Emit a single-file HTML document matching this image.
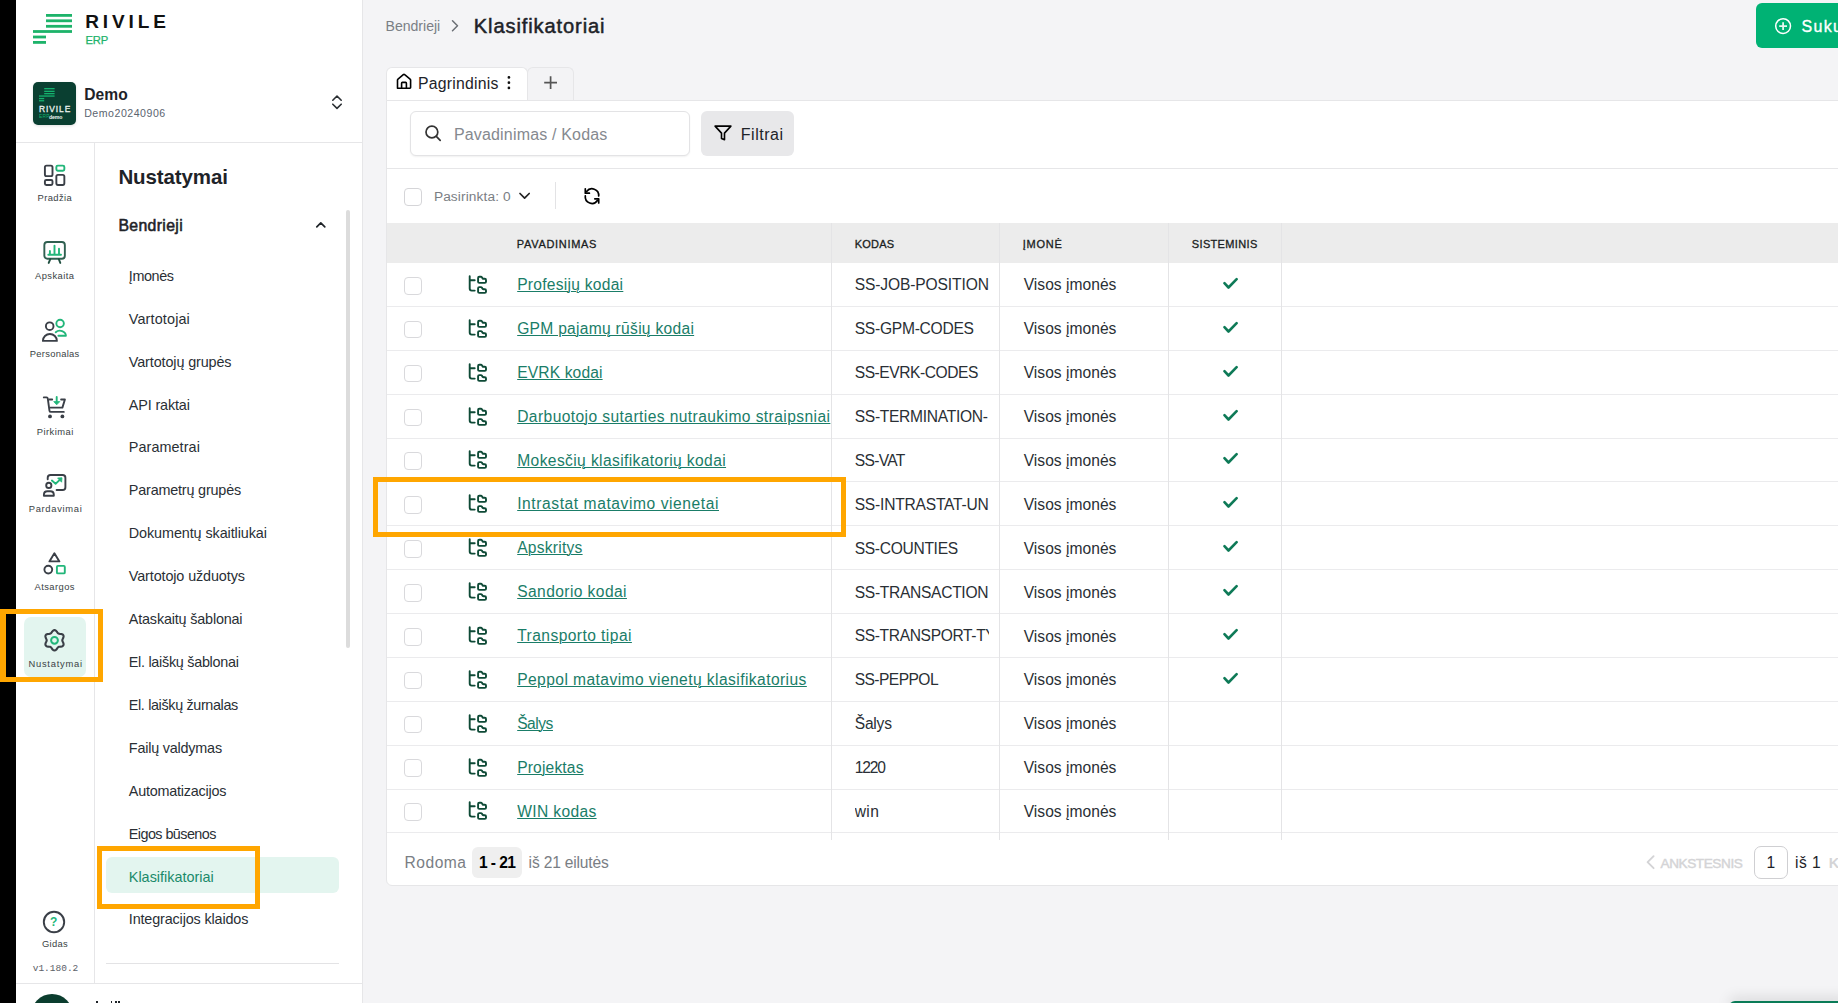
<!DOCTYPE html><html><head><meta charset="utf-8"><style>
*{margin:0;padding:0;box-sizing:border-box}
html,body{width:1838px;height:1003px;overflow:hidden;background:#f4f4f6;font-family:"Liberation Sans", sans-serif;}
.t{position:absolute;line-height:1;white-space:nowrap}
.a{position:absolute}
svg{position:absolute;overflow:visible}
</style></head><body>
<div class="a" style="left:0;top:0;width:16px;height:1003px;background:#000"></div>
<div class="a" style="left:16px;top:0;width:347px;height:1003px;background:#fff;border-right:1px solid #e6e6e8"></div>
<svg style="left:0;top:0" width="200" height="60"><rect x="46" y="14" width="26" height="2.8" fill="#1db36a"/><rect x="46" y="19.4" width="26" height="2.8" fill="#1db36a"/><rect x="46" y="24.9" width="26" height="2.8" fill="#1db36a"/><rect x="33" y="30.1" width="39" height="2.8" fill="#1db36a"/><rect x="33" y="35.6" width="13" height="2.8" fill="#1db36a"/><rect x="33" y="41" width="13" height="2.8" fill="#1db36a"/></svg>
<div class="t" style="left:85.2px;top:11.62px;font-size:19px;color:#111;font-weight:700;letter-spacing:3.900px;">RIVILE</div>
<div class="t" style="left:85.4px;top:34.52px;font-size:11.2px;color:#1db36a;font-weight:400;letter-spacing:-0.050px;-webkit-text-stroke:0.25px #1db36a">ERP</div>
<div class="a" style="left:33px;top:82px;width:43px;height:43px;background:#0a3f31;border-radius:5px;box-shadow:0 1px 3px rgba(0,0,0,.12)"></div>
<svg style="left:0;top:0" width="80" height="130"><rect x="44.2" y="88" width="10.4" height="1.3" fill="#14b26e"/><rect x="44.2" y="90.7" width="10.4" height="1.3" fill="#14b26e"/><rect x="44.2" y="93" width="10.4" height="1.3" fill="#14b26e"/><rect x="39" y="95.4" width="15.6" height="1.3" fill="#14b26e"/><rect x="39" y="97.9" width="5.2" height="1.3" fill="#14b26e"/><rect x="39" y="100.1" width="5.2" height="1.3" fill="#14b26e"/></svg>
<div class="t" style="left:38.9px;top:104.69px;font-size:8.4px;color:#eef2f0;font-weight:400;letter-spacing:0.960px;-webkit-text-stroke:0.3px #eef2f0">RIVILE</div>
<div class="t" style="left:38.9px;top:115.14px;font-size:4.8px;color:#14b26e;font-weight:400;letter-spacing:0.300px;">ERP</div>
<div class="t" style="left:49.0px;top:114.80px;font-size:5.2px;color:#eef2f0;font-weight:700;letter-spacing:-0.100px;">demo</div>
<div class="t" style="left:84.2px;top:86.69px;font-size:15.6px;color:#1e2328;font-weight:700;letter-spacing:0.065px;">Demo</div>
<div class="t" style="left:84.2px;top:107.73px;font-size:10.6px;color:#5b6470;font-weight:400;letter-spacing:0.508px;">Demo20240906</div>
<svg style="left:320px;top:60px" width="40" height="60" viewBox="0 0 40 60"><path d="M12.8 40.2 L17 36 L21.2 40.2 M12.8 44.2 L17 48.4 L21.2 44.2" fill="none" stroke="#2b2f33" stroke-width="1.6" stroke-linecap="round" stroke-linejoin="round"/></svg>
<div class="a" style="left:16px;top:142px;width:346px;height:1px;background:#e6e6e8"></div>
<div class="a" style="left:94px;top:143px;width:1px;height:840px;background:#e6e6e8"></div>
<div class="a" style="left:16px;top:983px;width:346px;height:1px;background:#e6e6e8"></div>
<svg style="left:40px;top:157px" width="30" height="36" viewBox="0 0 30 36"><rect x="4.9" y="8.65" width="7.6" height="10.5" rx="1.6" fill="none" stroke="#3a3f47" stroke-width="1.9" stroke-linecap="round" stroke-linejoin="round"/><rect x="16.35" y="8.65" width="8" height="5.1" rx="1.4" fill="none" stroke="#22b67a" stroke-width="1.9" stroke-linecap="round" stroke-linejoin="round"/><rect x="4.9" y="22.95" width="7.6" height="5" rx="1.4" fill="none" stroke="#3a3f47" stroke-width="1.9" stroke-linecap="round" stroke-linejoin="round"/><rect x="16.35" y="17.85" width="8" height="10.1" rx="1.6" fill="none" stroke="#3a3f47" stroke-width="1.9" stroke-linecap="round" stroke-linejoin="round"/></svg>
<svg style="left:40px;top:234px" width="30" height="36" viewBox="0 0 30 36"><rect x="4.35" y="7.95" width="20.5" height="16.8" rx="3" fill="none" stroke="#2f5f50" stroke-width="1.9" stroke-linecap="round" stroke-linejoin="round"/><path d="M10.3 25.2 L8.7 28.9 M18.8 25.2 L20.3 28.9" fill="none" stroke="#1f4f40" stroke-width="1.9" stroke-linecap="round" stroke-linejoin="round"/><path d="M8.3 20.8 L21 20.8 M9.9 20.8 L9.9 17 M14.5 20.8 L14.5 11.6 M19 20.8 L19 14.8" fill="none" stroke="#22b67a" stroke-width="1.9" stroke-linecap="round" stroke-linejoin="round"/></svg>
<svg style="left:40px;top:312px" width="30" height="36" viewBox="0 0 30 36"><circle cx="9.7" cy="14.2" r="3.8" fill="none" stroke="#3a3f47" stroke-width="1.9" stroke-linecap="round" stroke-linejoin="round"/><path d="M2.9 28.9 A7 6.9 0 0 1 16.9 28.9 Z" fill="none" stroke="#3a3f47" stroke-width="1.9" stroke-linecap="round" stroke-linejoin="round"/><circle cx="20.1" cy="11.5" r="3.75" fill="none" stroke="#22b67a" stroke-width="1.9" stroke-linecap="round" stroke-linejoin="round"/><path d="M15.7 20.2 A6 5.2 0 0 1 25.9 23.8 L18.4 23.8" fill="none" stroke="#22b67a" stroke-width="1.9" stroke-linecap="round" stroke-linejoin="round"/></svg>
<svg style="left:40px;top:390px" width="30" height="36" viewBox="0 0 30 36"><path d="M3.8 7.4 L6.6 7.4 Q7.6 7.4 7.8 8.6 L9.5 20.8 Q9.7 21.9 10.8 21.9 L23.8 21.9" fill="none" stroke="#3a3f47" stroke-width="1.9" stroke-linecap="round" stroke-linejoin="round"/><path d="M9.3 9.5 L12.2 9.5 M21.1 9.5 L24.9 9.5 L22.4 17.6 L10.4 17.6" fill="none" stroke="#3a3f47" stroke-width="1.9" stroke-linecap="round" stroke-linejoin="round"/><circle cx="10" cy="26.4" r="1.9" fill="#3a3f47"/><circle cx="22.4" cy="26.4" r="1.9" fill="#3a3f47"/><path d="M16.7 6.9 L16.7 11.5" fill="none" stroke="#22b67a" stroke-width="1.9" stroke-linecap="round" stroke-linejoin="round"/><path d="M13.7 11.6 L19.8 11.6 L16.7 14.8 Z" fill="#22b67a" stroke="#22b67a" stroke-width="0.8" stroke-linejoin="round"/></svg>
<svg style="left:40px;top:468px" width="30" height="36" viewBox="0 0 30 36"><path d="M7.7 11.3 L7.7 9.8 Q7.7 7 10.5 7 L22.6 7 Q25.4 7 25.4 9.8 L25.4 19.2 Q25.4 22 22.6 22 L16.6 22" fill="none" stroke="#3a3f47" stroke-width="1.9" stroke-linecap="round" stroke-linejoin="round"/><circle cx="8.8" cy="17.4" r="2.6" fill="none" stroke="#3a3f47" stroke-width="1.9" stroke-linecap="round" stroke-linejoin="round"/><path d="M3.9 27.8 L3.9 26.8 Q3.9 23.3 7.4 23.3 L10.3 23.3 Q13.8 23.3 13.8 26.8 L13.8 27.8 Z" fill="none" stroke="#3a3f47" stroke-width="1.9" stroke-linecap="round" stroke-linejoin="round"/><path d="M11.9 12.6 L15.6 15.7 L20.3 11.4" fill="none" stroke="#22b67a" stroke-width="1.9" stroke-linecap="round" stroke-linejoin="round"/><path d="M17.6 10 L22 9.8 L21.6 14.2 Z" fill="#22b67a" stroke="#22b67a" stroke-width="0.8" stroke-linejoin="round"/></svg>
<svg style="left:40px;top:546px" width="30" height="36" viewBox="0 0 30 36"><path d="M14.4 7.2 L19.4 15.4 L9.4 15.4 Z" fill="none" stroke="#3a3f47" stroke-width="1.9" stroke-linecap="round" stroke-linejoin="round"/><circle cx="8.3" cy="23.6" r="3.9" fill="none" stroke="#3a3f47" stroke-width="1.9" stroke-linecap="round" stroke-linejoin="round"/><rect x="16.9" y="19.9" width="7.9" height="7.5" rx="1" fill="none" stroke="#22b67a" stroke-width="1.9" stroke-linecap="round" stroke-linejoin="round"/></svg>
<div class="a" style="left:24px;top:617px;width:62px;height:60px;background:#e3f5ef;border-radius:7px"></div>
<svg style="left:40px;top:622px" width="30" height="36" viewBox="0 0 30 36"><path d="M14.50 8.10 L15.37 8.30 L16.17 8.85 L16.83 9.61 L17.37 10.41 L17.86 11.09 L18.40 11.55 L19.07 11.78 L19.90 11.87 L20.86 11.94 L21.85 12.13 L22.72 12.54 L23.33 13.20 L23.60 14.06 L23.52 15.02 L23.19 15.97 L22.77 16.84 L22.43 17.61 L22.30 18.30 L22.43 18.99 L22.77 19.76 L23.19 20.63 L23.52 21.58 L23.60 22.54 L23.33 23.40 L22.72 24.06 L21.85 24.47 L20.86 24.66 L19.90 24.73 L19.07 24.82 L18.40 25.05 L17.86 25.51 L17.37 26.19 L16.83 26.99 L16.17 27.75 L15.37 28.30 L14.50 28.50 L13.63 28.30 L12.83 27.75 L12.17 26.99 L11.63 26.19 L11.14 25.51 L10.60 25.05 L9.93 24.82 L9.10 24.73 L8.14 24.66 L7.15 24.47 L6.28 24.06 L5.67 23.40 L5.40 22.54 L5.48 21.58 L5.81 20.63 L6.23 19.76 L6.57 18.99 L6.70 18.30 L6.57 17.61 L6.23 16.84 L5.81 15.97 L5.48 15.02 L5.40 14.06 L5.67 13.20 L6.28 12.54 L7.15 12.13 L8.14 11.94 L9.10 11.87 L9.93 11.78 L10.60 11.55 L11.14 11.09 L11.63 10.41 L12.17 9.61 L12.83 8.85 L13.63 8.30 L14.50 8.10Z" fill="none" stroke="#3a3f47" stroke-width="2.1" stroke-linecap="round" stroke-linejoin="round"/><circle cx="14.5" cy="18.3" r="3.4" fill="none" stroke="#22b67a" stroke-width="2.0" stroke-linecap="round" stroke-linejoin="round"/></svg>
<svg style="left:43.4px;top:910.6px" width="22" height="22" viewBox="0 0 22 22"><circle cx="11" cy="11" r="10.2" fill="none" stroke="#3a3f47" stroke-width="1.9" stroke-linecap="round" stroke-linejoin="round"/></svg>
<div class="t" style="left:49.9px;top:915.84px;font-size:12px;color:#22b67a;font-weight:700;letter-spacing:0.000px;">?</div>
<div class="t" style="left:37.5px;top:193.04px;font-size:9.4px;color:#3a3f45;font-weight:400;letter-spacing:0.417px;">Pradžia</div>
<div class="t" style="left:35.0px;top:271.24px;font-size:9.4px;color:#3a3f45;font-weight:400;letter-spacing:0.445px;">Apskaita</div>
<div class="t" style="left:29.8px;top:349.04px;font-size:9.4px;color:#3a3f45;font-weight:400;letter-spacing:0.278px;">Personalas</div>
<div class="t" style="left:36.7px;top:426.54px;font-size:9.4px;color:#3a3f45;font-weight:400;letter-spacing:0.456px;">Pirkimai</div>
<div class="t" style="left:28.7px;top:504.34px;font-size:9.4px;color:#3a3f45;font-weight:400;letter-spacing:0.692px;">Pardavimai</div>
<div class="t" style="left:34.5px;top:582.34px;font-size:9.4px;color:#3a3f45;font-weight:400;letter-spacing:0.429px;">Atsargos</div>
<div class="t" style="left:28.5px;top:658.84px;font-size:9.4px;color:#3a3f45;font-weight:400;letter-spacing:0.732px;">Nustatymai</div>
<div class="t" style="left:41.9px;top:939.04px;font-size:9.4px;color:#3a3f45;font-weight:400;letter-spacing:0.325px;">Gidas</div>
<div class="t" style="left:32.7px;top:964.0px;font-size:9.5px;font-family:'Liberation Mono',monospace;color:#5c6168">v1.180.2</div>
<div class="a" style="left:31.3px;top:993.7px;width:42.2px;height:42.2px;border-radius:50%;background:#0b3d2e"></div>
<div class="a" style="left:95.9px;top:1001.2px;width:1.7px;height:2px;background:#1e2328"></div>
<div class="a" style="left:110.6px;top:1001.2px;width:1.7px;height:2px;background:#1e2328"></div>
<div class="a" style="left:114.9px;top:1001.2px;width:1.7px;height:2px;background:#1e2328"></div>
<div class="a" style="left:118.4px;top:1001.2px;width:1.7px;height:2px;background:#1e2328"></div>
<div class="t" style="left:118.4px;top:167.15px;font-size:20.5px;color:#1e2328;font-weight:700;letter-spacing:-0.108px;">Nustatymai</div>
<div class="t" style="left:118.4px;top:218.23px;font-size:15.8px;color:#1e2328;font-weight:400;letter-spacing:0.350px;-webkit-text-stroke:0.55px #1e2328">Bendrieji</div>
<svg style="left:310px;top:215px" width="20" height="20" viewBox="0 0 20 20"><path d="M6.8 11.8 L10.8 7.8 L14.8 11.8" fill="none" stroke="#1e2328" stroke-width="1.7" stroke-linecap="round" stroke-linejoin="round"/></svg>
<div class="a" style="left:346px;top:210px;width:4px;height:438px;background:#dcdcdc;border-radius:2px"></div>
<div class="a" style="left:106px;top:857px;width:233px;height:36px;background:#e3f5ef;border-radius:6px"></div>
<div class="t" style="left:128.8px;top:268.81px;font-size:14.4px;color:#2a2f35;font-weight:400;letter-spacing:-0.410px;">Įmonės</div>
<div class="t" style="left:128.8px;top:311.72px;font-size:14.4px;color:#2a2f35;font-weight:400;letter-spacing:0.143px;">Vartotojai</div>
<div class="t" style="left:128.8px;top:354.63px;font-size:14.4px;color:#2a2f35;font-weight:400;letter-spacing:-0.117px;">Vartotojų grupės</div>
<div class="t" style="left:128.8px;top:397.54px;font-size:14.4px;color:#2a2f35;font-weight:400;letter-spacing:-0.150px;">API raktai</div>
<div class="t" style="left:128.8px;top:440.45px;font-size:14.4px;color:#2a2f35;font-weight:400;letter-spacing:0.072px;">Parametrai</div>
<div class="t" style="left:128.8px;top:483.36px;font-size:14.4px;color:#2a2f35;font-weight:400;letter-spacing:-0.188px;">Parametrų grupės</div>
<div class="t" style="left:128.8px;top:526.27px;font-size:14.4px;color:#2a2f35;font-weight:400;letter-spacing:-0.095px;">Dokumentų skaitliukai</div>
<div class="t" style="left:128.8px;top:569.18px;font-size:14.4px;color:#2a2f35;font-weight:400;letter-spacing:-0.119px;">Vartotojo užduotys</div>
<div class="t" style="left:128.8px;top:612.09px;font-size:14.4px;color:#2a2f35;font-weight:400;letter-spacing:-0.178px;">Ataskaitų šablonai</div>
<div class="t" style="left:128.8px;top:655.00px;font-size:14.4px;color:#2a2f35;font-weight:400;letter-spacing:-0.283px;">El. laiškų šablonai</div>
<div class="t" style="left:128.8px;top:697.91px;font-size:14.4px;color:#2a2f35;font-weight:400;letter-spacing:-0.361px;">El. laiškų žurnalas</div>
<div class="t" style="left:128.8px;top:740.82px;font-size:14.4px;color:#2a2f35;font-weight:400;letter-spacing:-0.205px;">Failų valdymas</div>
<div class="t" style="left:128.8px;top:783.73px;font-size:14.4px;color:#2a2f35;font-weight:400;letter-spacing:-0.221px;">Automatizacijos</div>
<div class="t" style="left:128.8px;top:826.64px;font-size:14.4px;color:#2a2f35;font-weight:400;letter-spacing:-0.567px;">Eigos būsenos</div>
<div class="t" style="left:128.8px;top:869.55px;font-size:14.4px;color:#1a8a6a;font-weight:400;letter-spacing:0.011px;">Klasifikatoriai</div>
<div class="t" style="left:128.8px;top:912.46px;font-size:14.4px;color:#2a2f35;font-weight:400;letter-spacing:-0.150px;">Integracijos klaidos</div>
<div class="a" style="left:106px;top:963px;width:233px;height:1px;background:#e3e3e5"></div>
<div class="t" style="left:385.5px;top:18.96px;font-size:14.1px;color:#7b7f85;font-weight:400;letter-spacing:-0.018px;">Bendrieji</div>
<svg style="left:448px;top:16px" width="16" height="20" viewBox="0 0 16 20"><path d="M4.5 4.8 L9.5 9.8 L4.5 14.8" fill="none" stroke="#6b6f75" stroke-width="1.5" stroke-linecap="round" stroke-linejoin="round"/></svg>
<div class="t" style="left:473.8px;top:15.79px;font-size:20.1px;color:#1e2328;font-weight:400;letter-spacing:0.886px;-webkit-text-stroke:0.5px #1e2328">Klasifikatoriai</div>
<div class="a" style="left:1756px;top:3px;width:120px;height:45px;background:#00b274;border-radius:6px"></div>
<svg style="left:1765px;top:8px" width="36" height="36" viewBox="0 0 36 36"><circle cx="18.1" cy="18.1" r="7.4" fill="none" stroke="#fff" stroke-width="1.5"/><path d="M14.2 18.1 L22 18.1 M18.1 14.2 L18.1 22" stroke="#e8f7f0" stroke-width="1.8"/></svg>
<div class="t" style="left:1801.5px;top:18.86px;font-size:16px;color:#fff;font-weight:400;letter-spacing:1.300px;-webkit-text-stroke:0.35px #fff">Sukurti</div>
<div class="a" style="left:386px;top:67px;width:142px;height:34px;background:#fff;border:1px solid #e6e6e8;border-bottom:none;border-radius:6px 6px 0 0"></div>
<div class="a" style="left:527px;top:67px;width:47px;height:34px;background:#f3f3f5;border:1px solid #e6e6e8;border-bottom:none;border-radius:6px 6px 0 0"></div>
<svg style="left:392px;top:70px" width="24" height="24" viewBox="0 0 24 24"><path d="M5.5 18.2 L5.5 10 Q5.5 9.5 6 9.1 L11.3 4.7 Q12 4.1 12.7 4.7 L18.1 9.1 Q18.6 9.5 18.6 10 L18.6 17.6 Q18.6 18.2 18 18.2 Z M9.6 18.2 L9.6 13.2 Q9.6 12.4 10.4 12.4 L13.6 12.4 Q14.4 12.4 14.4 13.2 L14.4 18.2" fill="none" stroke="#000" stroke-width="1.6" stroke-linecap="round" stroke-linejoin="round"/></svg>
<div class="t" style="left:418.0px;top:75.63px;font-size:15.8px;color:#1e2328;font-weight:400;letter-spacing:0.230px;">Pagrindinis</div>
<svg style="left:500px;top:70px" width="16" height="24" viewBox="0 0 16 24"><circle cx="8.9" cy="7.4" r="1.35" fill="#111"/><circle cx="8.9" cy="12.7" r="1.35" fill="#111"/><circle cx="8.9" cy="17.9" r="1.35" fill="#111"/></svg>
<svg style="left:536px;top:70px" width="30" height="24" viewBox="0 0 30 24"><path d="M8.2 12.6 L21 12.6 M14.6 6.2 L14.6 19" stroke="#555" stroke-width="1.7"/></svg>
<div class="a" style="left:386px;top:100px;width:1460px;height:786px;background:#fff;border:1px solid #e6e6e8;border-radius:0 0 0 6px"></div>
<div class="a" style="left:409.5px;top:111px;width:280px;height:45px;background:#fff;border:1px solid #e3e3e5;border-radius:6px;box-shadow:0 1px 2px rgba(0,0,0,.06)"></div>
<svg style="left:420px;top:120px" width="26" height="26" viewBox="0 0 26 26"><circle cx="11.9" cy="12" r="5.9" fill="none" stroke="#333" stroke-width="1.7" stroke-linecap="round" stroke-linejoin="round"/><path d="M16.3 16.4 L20.2 20.3" fill="none" stroke="#333" stroke-width="1.7" stroke-linecap="round" stroke-linejoin="round"/></svg>
<div class="t" style="left:453.9px;top:126.86px;font-size:16px;color:#85898f;font-weight:400;letter-spacing:0.171px;">Pavadinimas / Kodas</div>
<div class="a" style="left:701px;top:111px;width:93px;height:45px;background:#e8e8ea;border-radius:6px"></div>
<svg style="left:710px;top:118px" width="28" height="30" viewBox="0 0 28 30"><path d="M5.1 8.1 L20.9 8.1 L14.5 15.1 L14.5 21.8 L11.5 20.6 L11.5 15.1 Z" fill="none" stroke="#000" stroke-width="1.6" stroke-linecap="round" stroke-linejoin="round"/></svg>
<div class="t" style="left:740.8px;top:126.86px;font-size:16px;color:#1e2328;font-weight:400;letter-spacing:0.515px;">Filtrai</div>
<div class="a" style="left:386px;top:168px;width:1452px;height:1px;background:#e6e6e8"></div>
<div class="a" style="left:404px;top:188px;width:18px;height:18px;border:1px solid #d5d5d8;border-radius:4px;background:#fff"></div>
<div class="t" style="left:433.9px;top:190.30px;font-size:13.7px;color:#7a7e84;font-weight:400;letter-spacing:0.115px;">Pasirinkta: 0</div>
<svg style="left:515px;top:186px" width="20" height="20" viewBox="0 0 20 20"><path d="M5 7.5 L9.6 12.2 L14.2 7.5" fill="none" stroke="#222" stroke-width="1.7" stroke-linecap="round" stroke-linejoin="round"/></svg>
<div class="a" style="left:555px;top:182px;width:1px;height:27px;background:#e3e3e5"></div>
<svg style="left:578px;top:182px" width="28" height="28" viewBox="0 0 28 28"><path d="M20.7 14 A6.7 6.7 0 0 0 8.6 9.6" fill="none" stroke="#000" stroke-width="1.7" stroke-linecap="round" stroke-linejoin="round"/><path d="M7.3 6.8 L7.3 11.2 L11.4 11.2" fill="none" stroke="#000" stroke-width="1.7" stroke-linecap="round" stroke-linejoin="round"/><path d="M7.3 13.9 A6.7 6.7 0 0 0 19.6 18.3" fill="none" stroke="#000" stroke-width="1.7" stroke-linecap="round" stroke-linejoin="round"/><path d="M16.8 16.8 L20.7 16.8 L20.7 20.9" fill="none" stroke="#000" stroke-width="1.7" stroke-linecap="round" stroke-linejoin="round"/></svg>
<div class="a" style="left:387px;top:223px;width:1451px;height:40px;background:#ececec"></div>
<div class="t" style="left:516.8px;top:238.89px;font-size:11px;color:#1a1d21;font-weight:400;letter-spacing:0.680px;-webkit-text-stroke:0.3px #1a1d21">PAVADINIMAS</div>
<div class="t" style="left:854.7px;top:238.89px;font-size:11px;color:#1a1d21;font-weight:400;letter-spacing:0.250px;-webkit-text-stroke:0.3px #1a1d21">KODAS</div>
<div class="t" style="left:1022.8px;top:238.89px;font-size:11px;color:#1a1d21;font-weight:400;letter-spacing:0.725px;-webkit-text-stroke:0.3px #1a1d21">ĮMONĖ</div>
<div class="t" style="left:1191.8px;top:238.89px;font-size:11px;color:#1a1d21;font-weight:400;letter-spacing:0.344px;-webkit-text-stroke:0.3px #1a1d21">SISTEMINIS</div>
<div class="a" style="left:387px;top:305.97px;width:1451px;height:1px;background:#ebebed"></div>
<div class="a" style="left:404.3px;top:276.90px;width:17.5px;height:17.7px;border:1px solid #d9d9dc;border-radius:4px;background:#fff"></div>
<svg style="left:463px;top:270.0px" width="30" height="30" viewBox="0 0 30 30"><path d="M6.7 6.2 L6.7 18.6 Q6.7 20.6 8.7 20.6 L11.7 20.6 M6.7 10.3 L11.7 10.3" fill="none" stroke="#0e4a36" stroke-width="1.9" stroke-linecap="round" stroke-linejoin="round"/><path d="M15.1 12 L15.1 7.9 Q15.1 6.7 16.3 6.7 L17.9 6.7 Q18.6 6.7 19 7.4 L19.5 8.3 Q19.9 8.8 20.6 8.8 L21.8 8.8 Q23 8.8 23 10 L23 11.7 Q23 12.9 21.8 12.9 L16.3 12.9 Q15.1 12.9 15.1 11.7 Z" fill="none" stroke="#0e4a36" stroke-width="1.9" stroke-linecap="round" stroke-linejoin="round"/><path d="M15.1 22 L15.1 18.3 Q15.1 17.1 16.3 17.1 L17.9 17.1 Q18.6 17.1 19 17.8 L19.5 18.7 Q19.9 19.2 20.6 19.2 L21.8 19.2 Q23 19.2 23 20.4 L23 21.7 Q23 22.9 21.8 22.9 L16.3 22.9 Q15.1 22.9 15.1 21.7 Z" fill="none" stroke="#0e4a36" stroke-width="1.9" stroke-linecap="round" stroke-linejoin="round"/></svg>
<div class="t" style="left:517.2px;top:276.79px;font-size:15.6px;color:#1a7d68;font-weight:400;letter-spacing:0.257px;text-decoration:underline;text-underline-offset:0.7px;text-decoration-thickness:1px">Profesijų kodai</div>
<div class="a" style="left:854.7px;top:262.60px;width:134.3px;height:43.87px;overflow:hidden"><div class="t" style="left:0.0px;top:14.39px;font-size:15.6px;color:#2a2f35;font-weight:400;letter-spacing:-0.130px;">SS-JOB-POSITION</div>
</div>
<div class="t" style="left:1023.7px;top:276.99px;font-size:15.6px;color:#2a2f35;font-weight:400;letter-spacing:0.022px;">Visos įmonės</div>
<svg style="left:1215px;top:272.0px" width="30" height="24" viewBox="0 0 30 24"><path d="M9.45 11.2 L13.5 15.5 L21.65 7.2" fill="none" stroke="#0e7a57" stroke-width="2.6" stroke-linecap="round" stroke-linejoin="round"/></svg>
<div class="a" style="left:387px;top:349.84px;width:1451px;height:1px;background:#ebebed"></div>
<div class="a" style="left:404.3px;top:320.77px;width:17.5px;height:17.7px;border:1px solid #d9d9dc;border-radius:4px;background:#fff"></div>
<svg style="left:463px;top:313.87px" width="30" height="30" viewBox="0 0 30 30"><path d="M6.7 6.2 L6.7 18.6 Q6.7 20.6 8.7 20.6 L11.7 20.6 M6.7 10.3 L11.7 10.3" fill="none" stroke="#0e4a36" stroke-width="1.9" stroke-linecap="round" stroke-linejoin="round"/><path d="M15.1 12 L15.1 7.9 Q15.1 6.7 16.3 6.7 L17.9 6.7 Q18.6 6.7 19 7.4 L19.5 8.3 Q19.9 8.8 20.6 8.8 L21.8 8.8 Q23 8.8 23 10 L23 11.7 Q23 12.9 21.8 12.9 L16.3 12.9 Q15.1 12.9 15.1 11.7 Z" fill="none" stroke="#0e4a36" stroke-width="1.9" stroke-linecap="round" stroke-linejoin="round"/><path d="M15.1 22 L15.1 18.3 Q15.1 17.1 16.3 17.1 L17.9 17.1 Q18.6 17.1 19 17.8 L19.5 18.7 Q19.9 19.2 20.6 19.2 L21.8 19.2 Q23 19.2 23 20.4 L23 21.7 Q23 22.9 21.8 22.9 L16.3 22.9 Q15.1 22.9 15.1 21.7 Z" fill="none" stroke="#0e4a36" stroke-width="1.9" stroke-linecap="round" stroke-linejoin="round"/></svg>
<div class="t" style="left:517.2px;top:320.73px;font-size:15.6px;color:#1a7d68;font-weight:400;letter-spacing:0.282px;text-decoration:underline;text-underline-offset:0.7px;text-decoration-thickness:1px">GPM pajamų rūšių kodai</div>
<div class="a" style="left:854.7px;top:306.47px;width:134.3px;height:43.87px;overflow:hidden"><div class="t" style="left:0.0px;top:14.46px;font-size:15.6px;color:#2a2f35;font-weight:400;letter-spacing:-0.259px;">SS-GPM-CODES</div>
</div>
<div class="t" style="left:1023.7px;top:320.93px;font-size:15.6px;color:#2a2f35;font-weight:400;letter-spacing:0.022px;">Visos įmonės</div>
<svg style="left:1215px;top:315.87px" width="30" height="24" viewBox="0 0 30 24"><path d="M9.45 11.2 L13.5 15.5 L21.65 7.2" fill="none" stroke="#0e7a57" stroke-width="2.6" stroke-linecap="round" stroke-linejoin="round"/></svg>
<div class="a" style="left:387px;top:393.71px;width:1451px;height:1px;background:#ebebed"></div>
<div class="a" style="left:404.3px;top:364.64px;width:17.5px;height:17.7px;border:1px solid #d9d9dc;border-radius:4px;background:#fff"></div>
<svg style="left:463px;top:357.74px" width="30" height="30" viewBox="0 0 30 30"><path d="M6.7 6.2 L6.7 18.6 Q6.7 20.6 8.7 20.6 L11.7 20.6 M6.7 10.3 L11.7 10.3" fill="none" stroke="#0e4a36" stroke-width="1.9" stroke-linecap="round" stroke-linejoin="round"/><path d="M15.1 12 L15.1 7.9 Q15.1 6.7 16.3 6.7 L17.9 6.7 Q18.6 6.7 19 7.4 L19.5 8.3 Q19.9 8.8 20.6 8.8 L21.8 8.8 Q23 8.8 23 10 L23 11.7 Q23 12.9 21.8 12.9 L16.3 12.9 Q15.1 12.9 15.1 11.7 Z" fill="none" stroke="#0e4a36" stroke-width="1.9" stroke-linecap="round" stroke-linejoin="round"/><path d="M15.1 22 L15.1 18.3 Q15.1 17.1 16.3 17.1 L17.9 17.1 Q18.6 17.1 19 17.8 L19.5 18.7 Q19.9 19.2 20.6 19.2 L21.8 19.2 Q23 19.2 23 20.4 L23 21.7 Q23 22.9 21.8 22.9 L16.3 22.9 Q15.1 22.9 15.1 21.7 Z" fill="none" stroke="#0e4a36" stroke-width="1.9" stroke-linecap="round" stroke-linejoin="round"/></svg>
<div class="t" style="left:517.2px;top:364.67px;font-size:15.6px;color:#1a7d68;font-weight:400;letter-spacing:0.133px;text-decoration:underline;text-underline-offset:0.7px;text-decoration-thickness:1px">EVRK kodai</div>
<div class="a" style="left:854.7px;top:350.34px;width:134.3px;height:43.87px;overflow:hidden"><div class="t" style="left:0.0px;top:14.53px;font-size:15.6px;color:#2a2f35;font-weight:400;letter-spacing:-0.445px;">SS-EVRK-CODES</div>
</div>
<div class="t" style="left:1023.7px;top:364.87px;font-size:15.6px;color:#2a2f35;font-weight:400;letter-spacing:0.022px;">Visos įmonės</div>
<svg style="left:1215px;top:359.74px" width="30" height="24" viewBox="0 0 30 24"><path d="M9.45 11.2 L13.5 15.5 L21.65 7.2" fill="none" stroke="#0e7a57" stroke-width="2.6" stroke-linecap="round" stroke-linejoin="round"/></svg>
<div class="a" style="left:387px;top:437.58px;width:1451px;height:1px;background:#ebebed"></div>
<div class="a" style="left:404.3px;top:408.51px;width:17.5px;height:17.7px;border:1px solid #d9d9dc;border-radius:4px;background:#fff"></div>
<svg style="left:463px;top:401.61px" width="30" height="30" viewBox="0 0 30 30"><path d="M6.7 6.2 L6.7 18.6 Q6.7 20.6 8.7 20.6 L11.7 20.6 M6.7 10.3 L11.7 10.3" fill="none" stroke="#0e4a36" stroke-width="1.9" stroke-linecap="round" stroke-linejoin="round"/><path d="M15.1 12 L15.1 7.9 Q15.1 6.7 16.3 6.7 L17.9 6.7 Q18.6 6.7 19 7.4 L19.5 8.3 Q19.9 8.8 20.6 8.8 L21.8 8.8 Q23 8.8 23 10 L23 11.7 Q23 12.9 21.8 12.9 L16.3 12.9 Q15.1 12.9 15.1 11.7 Z" fill="none" stroke="#0e4a36" stroke-width="1.9" stroke-linecap="round" stroke-linejoin="round"/><path d="M15.1 22 L15.1 18.3 Q15.1 17.1 16.3 17.1 L17.9 17.1 Q18.6 17.1 19 17.8 L19.5 18.7 Q19.9 19.2 20.6 19.2 L21.8 19.2 Q23 19.2 23 20.4 L23 21.7 Q23 22.9 21.8 22.9 L16.3 22.9 Q15.1 22.9 15.1 21.7 Z" fill="none" stroke="#0e4a36" stroke-width="1.9" stroke-linecap="round" stroke-linejoin="round"/></svg>
<div class="t" style="left:517.2px;top:408.61px;font-size:15.6px;color:#1a7d68;font-weight:400;letter-spacing:0.410px;text-decoration:underline;text-underline-offset:0.7px;text-decoration-thickness:1px">Darbuotojo sutarties nutraukimo straipsniai</div>
<div class="a" style="left:854.7px;top:394.21px;width:134.3px;height:43.87px;overflow:hidden"><div class="t" style="left:0.0px;top:14.60px;font-size:15.6px;color:#2a2f35;font-weight:400;letter-spacing:-0.303px;">SS-TERMINATION-</div>
</div>
<div class="t" style="left:1023.7px;top:408.81px;font-size:15.6px;color:#2a2f35;font-weight:400;letter-spacing:0.022px;">Visos įmonės</div>
<svg style="left:1215px;top:403.61px" width="30" height="24" viewBox="0 0 30 24"><path d="M9.45 11.2 L13.5 15.5 L21.65 7.2" fill="none" stroke="#0e7a57" stroke-width="2.6" stroke-linecap="round" stroke-linejoin="round"/></svg>
<div class="a" style="left:387px;top:481.45px;width:1451px;height:1px;background:#ebebed"></div>
<div class="a" style="left:404.3px;top:452.38px;width:17.5px;height:17.7px;border:1px solid #d9d9dc;border-radius:4px;background:#fff"></div>
<svg style="left:463px;top:445.48px" width="30" height="30" viewBox="0 0 30 30"><path d="M6.7 6.2 L6.7 18.6 Q6.7 20.6 8.7 20.6 L11.7 20.6 M6.7 10.3 L11.7 10.3" fill="none" stroke="#0e4a36" stroke-width="1.9" stroke-linecap="round" stroke-linejoin="round"/><path d="M15.1 12 L15.1 7.9 Q15.1 6.7 16.3 6.7 L17.9 6.7 Q18.6 6.7 19 7.4 L19.5 8.3 Q19.9 8.8 20.6 8.8 L21.8 8.8 Q23 8.8 23 10 L23 11.7 Q23 12.9 21.8 12.9 L16.3 12.9 Q15.1 12.9 15.1 11.7 Z" fill="none" stroke="#0e4a36" stroke-width="1.9" stroke-linecap="round" stroke-linejoin="round"/><path d="M15.1 22 L15.1 18.3 Q15.1 17.1 16.3 17.1 L17.9 17.1 Q18.6 17.1 19 17.8 L19.5 18.7 Q19.9 19.2 20.6 19.2 L21.8 19.2 Q23 19.2 23 20.4 L23 21.7 Q23 22.9 21.8 22.9 L16.3 22.9 Q15.1 22.9 15.1 21.7 Z" fill="none" stroke="#0e4a36" stroke-width="1.9" stroke-linecap="round" stroke-linejoin="round"/></svg>
<div class="t" style="left:517.2px;top:452.55px;font-size:15.6px;color:#1a7d68;font-weight:400;letter-spacing:0.389px;text-decoration:underline;text-underline-offset:0.7px;text-decoration-thickness:1px">Mokesčių klasifikatorių kodai</div>
<div class="a" style="left:854.7px;top:438.08px;width:134.3px;height:43.87px;overflow:hidden"><div class="t" style="left:0.0px;top:14.67px;font-size:15.6px;color:#2a2f35;font-weight:400;letter-spacing:-0.672px;">SS-VAT</div>
</div>
<div class="t" style="left:1023.7px;top:452.75px;font-size:15.6px;color:#2a2f35;font-weight:400;letter-spacing:0.022px;">Visos įmonės</div>
<svg style="left:1215px;top:447.48px" width="30" height="24" viewBox="0 0 30 24"><path d="M9.45 11.2 L13.5 15.5 L21.65 7.2" fill="none" stroke="#0e7a57" stroke-width="2.6" stroke-linecap="round" stroke-linejoin="round"/></svg>
<div class="a" style="left:387px;top:525.32px;width:1451px;height:1px;background:#ebebed"></div>
<div class="a" style="left:404.3px;top:496.25px;width:17.5px;height:17.7px;border:1px solid #d9d9dc;border-radius:4px;background:#fff"></div>
<svg style="left:463px;top:489.35px" width="30" height="30" viewBox="0 0 30 30"><path d="M6.7 6.2 L6.7 18.6 Q6.7 20.6 8.7 20.6 L11.7 20.6 M6.7 10.3 L11.7 10.3" fill="none" stroke="#0e4a36" stroke-width="1.9" stroke-linecap="round" stroke-linejoin="round"/><path d="M15.1 12 L15.1 7.9 Q15.1 6.7 16.3 6.7 L17.9 6.7 Q18.6 6.7 19 7.4 L19.5 8.3 Q19.9 8.8 20.6 8.8 L21.8 8.8 Q23 8.8 23 10 L23 11.7 Q23 12.9 21.8 12.9 L16.3 12.9 Q15.1 12.9 15.1 11.7 Z" fill="none" stroke="#0e4a36" stroke-width="1.9" stroke-linecap="round" stroke-linejoin="round"/><path d="M15.1 22 L15.1 18.3 Q15.1 17.1 16.3 17.1 L17.9 17.1 Q18.6 17.1 19 17.8 L19.5 18.7 Q19.9 19.2 20.6 19.2 L21.8 19.2 Q23 19.2 23 20.4 L23 21.7 Q23 22.9 21.8 22.9 L16.3 22.9 Q15.1 22.9 15.1 21.7 Z" fill="none" stroke="#0e4a36" stroke-width="1.9" stroke-linecap="round" stroke-linejoin="round"/></svg>
<div class="t" style="left:517.2px;top:496.49px;font-size:15.6px;color:#1a7d68;font-weight:400;letter-spacing:0.573px;text-decoration:underline;text-underline-offset:0.7px;text-decoration-thickness:1px">Intrastat matavimo vienetai</div>
<div class="a" style="left:854.7px;top:481.95px;width:134.3px;height:43.87px;overflow:hidden"><div class="t" style="left:0.0px;top:14.74px;font-size:15.6px;color:#2a2f35;font-weight:400;letter-spacing:-0.217px;">SS-INTRASTAT-UN</div>
</div>
<div class="t" style="left:1023.7px;top:496.69px;font-size:15.6px;color:#2a2f35;font-weight:400;letter-spacing:0.022px;">Visos įmonės</div>
<svg style="left:1215px;top:491.35px" width="30" height="24" viewBox="0 0 30 24"><path d="M9.45 11.2 L13.5 15.5 L21.65 7.2" fill="none" stroke="#0e7a57" stroke-width="2.6" stroke-linecap="round" stroke-linejoin="round"/></svg>
<div class="a" style="left:387px;top:569.19px;width:1451px;height:1px;background:#ebebed"></div>
<div class="a" style="left:404.3px;top:540.12px;width:17.5px;height:17.7px;border:1px solid #d9d9dc;border-radius:4px;background:#fff"></div>
<svg style="left:463px;top:533.22px" width="30" height="30" viewBox="0 0 30 30"><path d="M6.7 6.2 L6.7 18.6 Q6.7 20.6 8.7 20.6 L11.7 20.6 M6.7 10.3 L11.7 10.3" fill="none" stroke="#0e4a36" stroke-width="1.9" stroke-linecap="round" stroke-linejoin="round"/><path d="M15.1 12 L15.1 7.9 Q15.1 6.7 16.3 6.7 L17.9 6.7 Q18.6 6.7 19 7.4 L19.5 8.3 Q19.9 8.8 20.6 8.8 L21.8 8.8 Q23 8.8 23 10 L23 11.7 Q23 12.9 21.8 12.9 L16.3 12.9 Q15.1 12.9 15.1 11.7 Z" fill="none" stroke="#0e4a36" stroke-width="1.9" stroke-linecap="round" stroke-linejoin="round"/><path d="M15.1 22 L15.1 18.3 Q15.1 17.1 16.3 17.1 L17.9 17.1 Q18.6 17.1 19 17.8 L19.5 18.7 Q19.9 19.2 20.6 19.2 L21.8 19.2 Q23 19.2 23 20.4 L23 21.7 Q23 22.9 21.8 22.9 L16.3 22.9 Q15.1 22.9 15.1 21.7 Z" fill="none" stroke="#0e4a36" stroke-width="1.9" stroke-linecap="round" stroke-linejoin="round"/></svg>
<div class="t" style="left:517.2px;top:540.43px;font-size:15.6px;color:#1a7d68;font-weight:400;letter-spacing:0.238px;text-decoration:underline;text-underline-offset:0.7px;text-decoration-thickness:1px">Apskritys</div>
<div class="a" style="left:854.7px;top:525.82px;width:134.3px;height:43.87px;overflow:hidden"><div class="t" style="left:0.0px;top:14.81px;font-size:15.6px;color:#2a2f35;font-weight:400;letter-spacing:-0.312px;">SS-COUNTIES</div>
</div>
<div class="t" style="left:1023.7px;top:540.63px;font-size:15.6px;color:#2a2f35;font-weight:400;letter-spacing:0.022px;">Visos įmonės</div>
<svg style="left:1215px;top:535.22px" width="30" height="24" viewBox="0 0 30 24"><path d="M9.45 11.2 L13.5 15.5 L21.65 7.2" fill="none" stroke="#0e7a57" stroke-width="2.6" stroke-linecap="round" stroke-linejoin="round"/></svg>
<div class="a" style="left:387px;top:613.06px;width:1451px;height:1px;background:#ebebed"></div>
<div class="a" style="left:404.3px;top:583.99px;width:17.5px;height:17.7px;border:1px solid #d9d9dc;border-radius:4px;background:#fff"></div>
<svg style="left:463px;top:577.09px" width="30" height="30" viewBox="0 0 30 30"><path d="M6.7 6.2 L6.7 18.6 Q6.7 20.6 8.7 20.6 L11.7 20.6 M6.7 10.3 L11.7 10.3" fill="none" stroke="#0e4a36" stroke-width="1.9" stroke-linecap="round" stroke-linejoin="round"/><path d="M15.1 12 L15.1 7.9 Q15.1 6.7 16.3 6.7 L17.9 6.7 Q18.6 6.7 19 7.4 L19.5 8.3 Q19.9 8.8 20.6 8.8 L21.8 8.8 Q23 8.8 23 10 L23 11.7 Q23 12.9 21.8 12.9 L16.3 12.9 Q15.1 12.9 15.1 11.7 Z" fill="none" stroke="#0e4a36" stroke-width="1.9" stroke-linecap="round" stroke-linejoin="round"/><path d="M15.1 22 L15.1 18.3 Q15.1 17.1 16.3 17.1 L17.9 17.1 Q18.6 17.1 19 17.8 L19.5 18.7 Q19.9 19.2 20.6 19.2 L21.8 19.2 Q23 19.2 23 20.4 L23 21.7 Q23 22.9 21.8 22.9 L16.3 22.9 Q15.1 22.9 15.1 21.7 Z" fill="none" stroke="#0e4a36" stroke-width="1.9" stroke-linecap="round" stroke-linejoin="round"/></svg>
<div class="t" style="left:517.2px;top:584.37px;font-size:15.6px;color:#1a7d68;font-weight:400;letter-spacing:0.408px;text-decoration:underline;text-underline-offset:0.7px;text-decoration-thickness:1px">Sandorio kodai</div>
<div class="a" style="left:854.7px;top:569.69px;width:134.3px;height:43.87px;overflow:hidden"><div class="t" style="left:0.0px;top:14.88px;font-size:15.6px;color:#2a2f35;font-weight:400;letter-spacing:-0.306px;">SS-TRANSACTION</div>
</div>
<div class="t" style="left:1023.7px;top:584.57px;font-size:15.6px;color:#2a2f35;font-weight:400;letter-spacing:0.022px;">Visos įmonės</div>
<svg style="left:1215px;top:579.09px" width="30" height="24" viewBox="0 0 30 24"><path d="M9.45 11.2 L13.5 15.5 L21.65 7.2" fill="none" stroke="#0e7a57" stroke-width="2.6" stroke-linecap="round" stroke-linejoin="round"/></svg>
<div class="a" style="left:387px;top:656.93px;width:1451px;height:1px;background:#ebebed"></div>
<div class="a" style="left:404.3px;top:627.86px;width:17.5px;height:17.7px;border:1px solid #d9d9dc;border-radius:4px;background:#fff"></div>
<svg style="left:463px;top:620.96px" width="30" height="30" viewBox="0 0 30 30"><path d="M6.7 6.2 L6.7 18.6 Q6.7 20.6 8.7 20.6 L11.7 20.6 M6.7 10.3 L11.7 10.3" fill="none" stroke="#0e4a36" stroke-width="1.9" stroke-linecap="round" stroke-linejoin="round"/><path d="M15.1 12 L15.1 7.9 Q15.1 6.7 16.3 6.7 L17.9 6.7 Q18.6 6.7 19 7.4 L19.5 8.3 Q19.9 8.8 20.6 8.8 L21.8 8.8 Q23 8.8 23 10 L23 11.7 Q23 12.9 21.8 12.9 L16.3 12.9 Q15.1 12.9 15.1 11.7 Z" fill="none" stroke="#0e4a36" stroke-width="1.9" stroke-linecap="round" stroke-linejoin="round"/><path d="M15.1 22 L15.1 18.3 Q15.1 17.1 16.3 17.1 L17.9 17.1 Q18.6 17.1 19 17.8 L19.5 18.7 Q19.9 19.2 20.6 19.2 L21.8 19.2 Q23 19.2 23 20.4 L23 21.7 Q23 22.9 21.8 22.9 L16.3 22.9 Q15.1 22.9 15.1 21.7 Z" fill="none" stroke="#0e4a36" stroke-width="1.9" stroke-linecap="round" stroke-linejoin="round"/></svg>
<div class="t" style="left:517.2px;top:628.31px;font-size:15.6px;color:#1a7d68;font-weight:400;letter-spacing:0.433px;text-decoration:underline;text-underline-offset:0.7px;text-decoration-thickness:1px">Transporto tipai</div>
<div class="a" style="left:854.7px;top:613.56px;width:134.3px;height:43.87px;overflow:hidden"><div class="t" style="left:0.0px;top:14.95px;font-size:15.6px;color:#2a2f35;font-weight:400;letter-spacing:-0.362px;">SS-TRANSPORT-TYPES</div>
</div>
<div class="t" style="left:1023.7px;top:628.51px;font-size:15.6px;color:#2a2f35;font-weight:400;letter-spacing:0.022px;">Visos įmonės</div>
<svg style="left:1215px;top:622.96px" width="30" height="24" viewBox="0 0 30 24"><path d="M9.45 11.2 L13.5 15.5 L21.65 7.2" fill="none" stroke="#0e7a57" stroke-width="2.6" stroke-linecap="round" stroke-linejoin="round"/></svg>
<div class="a" style="left:387px;top:700.80px;width:1451px;height:1px;background:#ebebed"></div>
<div class="a" style="left:404.3px;top:671.73px;width:17.5px;height:17.7px;border:1px solid #d9d9dc;border-radius:4px;background:#fff"></div>
<svg style="left:463px;top:664.83px" width="30" height="30" viewBox="0 0 30 30"><path d="M6.7 6.2 L6.7 18.6 Q6.7 20.6 8.7 20.6 L11.7 20.6 M6.7 10.3 L11.7 10.3" fill="none" stroke="#0e4a36" stroke-width="1.9" stroke-linecap="round" stroke-linejoin="round"/><path d="M15.1 12 L15.1 7.9 Q15.1 6.7 16.3 6.7 L17.9 6.7 Q18.6 6.7 19 7.4 L19.5 8.3 Q19.9 8.8 20.6 8.8 L21.8 8.8 Q23 8.8 23 10 L23 11.7 Q23 12.9 21.8 12.9 L16.3 12.9 Q15.1 12.9 15.1 11.7 Z" fill="none" stroke="#0e4a36" stroke-width="1.9" stroke-linecap="round" stroke-linejoin="round"/><path d="M15.1 22 L15.1 18.3 Q15.1 17.1 16.3 17.1 L17.9 17.1 Q18.6 17.1 19 17.8 L19.5 18.7 Q19.9 19.2 20.6 19.2 L21.8 19.2 Q23 19.2 23 20.4 L23 21.7 Q23 22.9 21.8 22.9 L16.3 22.9 Q15.1 22.9 15.1 21.7 Z" fill="none" stroke="#0e4a36" stroke-width="1.9" stroke-linecap="round" stroke-linejoin="round"/></svg>
<div class="t" style="left:517.2px;top:672.25px;font-size:15.6px;color:#1a7d68;font-weight:400;letter-spacing:0.426px;text-decoration:underline;text-underline-offset:0.7px;text-decoration-thickness:1px">Peppol matavimo vienetų klasifikatorius</div>
<div class="a" style="left:854.7px;top:657.43px;width:134.3px;height:43.87px;overflow:hidden"><div class="t" style="left:0.0px;top:15.02px;font-size:15.6px;color:#2a2f35;font-weight:400;letter-spacing:-0.562px;">SS-PEPPOL</div>
</div>
<div class="t" style="left:1023.7px;top:672.45px;font-size:15.6px;color:#2a2f35;font-weight:400;letter-spacing:0.022px;">Visos įmonės</div>
<svg style="left:1215px;top:666.83px" width="30" height="24" viewBox="0 0 30 24"><path d="M9.45 11.2 L13.5 15.5 L21.65 7.2" fill="none" stroke="#0e7a57" stroke-width="2.6" stroke-linecap="round" stroke-linejoin="round"/></svg>
<div class="a" style="left:387px;top:744.67px;width:1451px;height:1px;background:#ebebed"></div>
<div class="a" style="left:404.3px;top:715.60px;width:17.5px;height:17.7px;border:1px solid #d9d9dc;border-radius:4px;background:#fff"></div>
<svg style="left:463px;top:708.7px" width="30" height="30" viewBox="0 0 30 30"><path d="M6.7 6.2 L6.7 18.6 Q6.7 20.6 8.7 20.6 L11.7 20.6 M6.7 10.3 L11.7 10.3" fill="none" stroke="#0e4a36" stroke-width="1.9" stroke-linecap="round" stroke-linejoin="round"/><path d="M15.1 12 L15.1 7.9 Q15.1 6.7 16.3 6.7 L17.9 6.7 Q18.6 6.7 19 7.4 L19.5 8.3 Q19.9 8.8 20.6 8.8 L21.8 8.8 Q23 8.8 23 10 L23 11.7 Q23 12.9 21.8 12.9 L16.3 12.9 Q15.1 12.9 15.1 11.7 Z" fill="none" stroke="#0e4a36" stroke-width="1.9" stroke-linecap="round" stroke-linejoin="round"/><path d="M15.1 22 L15.1 18.3 Q15.1 17.1 16.3 17.1 L17.9 17.1 Q18.6 17.1 19 17.8 L19.5 18.7 Q19.9 19.2 20.6 19.2 L21.8 19.2 Q23 19.2 23 20.4 L23 21.7 Q23 22.9 21.8 22.9 L16.3 22.9 Q15.1 22.9 15.1 21.7 Z" fill="none" stroke="#0e4a36" stroke-width="1.9" stroke-linecap="round" stroke-linejoin="round"/></svg>
<div class="t" style="left:517.2px;top:716.19px;font-size:15.6px;color:#1a7d68;font-weight:400;letter-spacing:-0.475px;text-decoration:underline;text-underline-offset:0.7px;text-decoration-thickness:1px">Šalys</div>
<div class="a" style="left:854.7px;top:701.30px;width:134.3px;height:43.87px;overflow:hidden"><div class="t" style="left:0.0px;top:15.09px;font-size:15.6px;color:#2a2f35;font-weight:400;letter-spacing:-0.212px;">Šalys</div>
</div>
<div class="t" style="left:1023.7px;top:716.39px;font-size:15.6px;color:#2a2f35;font-weight:400;letter-spacing:0.022px;">Visos įmonės</div>
<div class="a" style="left:387px;top:788.54px;width:1451px;height:1px;background:#ebebed"></div>
<div class="a" style="left:404.3px;top:759.47px;width:17.5px;height:17.7px;border:1px solid #d9d9dc;border-radius:4px;background:#fff"></div>
<svg style="left:463px;top:752.57px" width="30" height="30" viewBox="0 0 30 30"><path d="M6.7 6.2 L6.7 18.6 Q6.7 20.6 8.7 20.6 L11.7 20.6 M6.7 10.3 L11.7 10.3" fill="none" stroke="#0e4a36" stroke-width="1.9" stroke-linecap="round" stroke-linejoin="round"/><path d="M15.1 12 L15.1 7.9 Q15.1 6.7 16.3 6.7 L17.9 6.7 Q18.6 6.7 19 7.4 L19.5 8.3 Q19.9 8.8 20.6 8.8 L21.8 8.8 Q23 8.8 23 10 L23 11.7 Q23 12.9 21.8 12.9 L16.3 12.9 Q15.1 12.9 15.1 11.7 Z" fill="none" stroke="#0e4a36" stroke-width="1.9" stroke-linecap="round" stroke-linejoin="round"/><path d="M15.1 22 L15.1 18.3 Q15.1 17.1 16.3 17.1 L17.9 17.1 Q18.6 17.1 19 17.8 L19.5 18.7 Q19.9 19.2 20.6 19.2 L21.8 19.2 Q23 19.2 23 20.4 L23 21.7 Q23 22.9 21.8 22.9 L16.3 22.9 Q15.1 22.9 15.1 21.7 Z" fill="none" stroke="#0e4a36" stroke-width="1.9" stroke-linecap="round" stroke-linejoin="round"/></svg>
<div class="t" style="left:517.2px;top:760.13px;font-size:15.6px;color:#1a7d68;font-weight:400;letter-spacing:0.161px;text-decoration:underline;text-underline-offset:0.7px;text-decoration-thickness:1px">Projektas</div>
<div class="a" style="left:854.7px;top:745.17px;width:134.3px;height:43.87px;overflow:hidden"><div class="t" style="left:0.0px;top:15.16px;font-size:15.6px;color:#2a2f35;font-weight:400;letter-spacing:-1.112px;">1220</div>
</div>
<div class="t" style="left:1023.7px;top:760.33px;font-size:15.6px;color:#2a2f35;font-weight:400;letter-spacing:0.022px;">Visos įmonės</div>
<div class="a" style="left:387px;top:832.41px;width:1451px;height:1px;background:#ebebed"></div>
<div class="a" style="left:404.3px;top:803.34px;width:17.5px;height:17.7px;border:1px solid #d9d9dc;border-radius:4px;background:#fff"></div>
<svg style="left:463px;top:796.44px" width="30" height="30" viewBox="0 0 30 30"><path d="M6.7 6.2 L6.7 18.6 Q6.7 20.6 8.7 20.6 L11.7 20.6 M6.7 10.3 L11.7 10.3" fill="none" stroke="#0e4a36" stroke-width="1.9" stroke-linecap="round" stroke-linejoin="round"/><path d="M15.1 12 L15.1 7.9 Q15.1 6.7 16.3 6.7 L17.9 6.7 Q18.6 6.7 19 7.4 L19.5 8.3 Q19.9 8.8 20.6 8.8 L21.8 8.8 Q23 8.8 23 10 L23 11.7 Q23 12.9 21.8 12.9 L16.3 12.9 Q15.1 12.9 15.1 11.7 Z" fill="none" stroke="#0e4a36" stroke-width="1.9" stroke-linecap="round" stroke-linejoin="round"/><path d="M15.1 22 L15.1 18.3 Q15.1 17.1 16.3 17.1 L17.9 17.1 Q18.6 17.1 19 17.8 L19.5 18.7 Q19.9 19.2 20.6 19.2 L21.8 19.2 Q23 19.2 23 20.4 L23 21.7 Q23 22.9 21.8 22.9 L16.3 22.9 Q15.1 22.9 15.1 21.7 Z" fill="none" stroke="#0e4a36" stroke-width="1.9" stroke-linecap="round" stroke-linejoin="round"/></svg>
<div class="t" style="left:517.2px;top:804.07px;font-size:15.6px;color:#1a7d68;font-weight:400;letter-spacing:0.350px;text-decoration:underline;text-underline-offset:0.7px;text-decoration-thickness:1px">WIN kodas</div>
<div class="a" style="left:854.7px;top:789.04px;width:134.3px;height:43.87px;overflow:hidden"><div class="t" style="left:0.0px;top:15.23px;font-size:15.6px;color:#2a2f35;font-weight:400;letter-spacing:0.388px;">win</div>
</div>
<div class="t" style="left:1023.7px;top:804.27px;font-size:15.6px;color:#2a2f35;font-weight:400;letter-spacing:0.022px;">Visos įmonės</div>
<div class="a" style="left:831px;top:223px;width:1px;height:617px;background:#e4e4e6"></div>
<div class="a" style="left:999px;top:223px;width:1px;height:617px;background:#e4e4e6"></div>
<div class="a" style="left:1168px;top:223px;width:1px;height:617px;background:#e4e4e6"></div>
<div class="a" style="left:1281px;top:223px;width:1px;height:617px;background:#e4e4e6"></div>
<div class="t" style="left:404.6px;top:855.09px;font-size:15.6px;color:#7a7e84;font-weight:400;letter-spacing:0.490px;">Rodoma</div>
<div class="a" style="left:472px;top:847px;width:50px;height:31px;background:#efefef;border-radius:6px"></div>
<div class="t" style="left:479.0px;top:855.09px;font-size:15.6px;color:#000;font-weight:700;letter-spacing:-0.600px;">1 - 21</div>
<div class="t" style="left:528.6px;top:855.09px;font-size:15.6px;color:#7a7e84;font-weight:400;letter-spacing:-0.183px;">iš 21 eilutės</div>
<svg style="left:1640px;top:850px" width="20" height="22" viewBox="0 0 20 22"><path d="M13.6 6.2 L7.6 12.2 L13.6 18.2" fill="none" stroke="#d4d4d6" stroke-width="1.9" stroke-linecap="round" stroke-linejoin="round"/></svg>
<div class="t" style="left:1660.5px;top:856.79px;font-size:13.6px;color:#d4d4d6;font-weight:400;letter-spacing:-0.422px;-webkit-text-stroke:0.45px #d4d4d6">ANKSTESNIS</div>
<div class="a" style="left:1754px;top:846px;width:34px;height:33px;border:1px solid #cfcfd2;border-radius:7px;background:#fff"></div>
<div class="t" style="left:1766.5px;top:855.09px;font-size:15.6px;color:#1e2328;font-weight:400;letter-spacing:0.000px;">1</div>
<div class="t" style="left:1795.0px;top:855.09px;font-size:15.6px;color:#1e2328;font-weight:400;letter-spacing:0.500px;">iš 1</div>
<div class="t" style="left:1828.7px;top:855.94px;font-size:14.6px;color:#d4d4d6;font-weight:700;letter-spacing:0.000px;">KITAS</div>
<div class="a" style="left:1728.5px;top:1000.8px;width:120px;height:10px;background:#0a7b57;border-radius:6px 0 0 0;box-shadow:0 -3px 14px rgba(0,0,0,.13)"></div>
<div class="a" style="left:0px;top:609px;width:103px;height:73px;border:5px solid #ffa600;border-left-width:6px"></div>
<div class="a" style="left:97.3px;top:845.6px;width:162.5px;height:63.4px;border:5px solid #ffa600;border-left-width:5px"></div>
<div class="a" style="left:373px;top:477px;width:473px;height:60px;border:5px solid #ffa600;border-left-width:5px"></div>
</body></html>
